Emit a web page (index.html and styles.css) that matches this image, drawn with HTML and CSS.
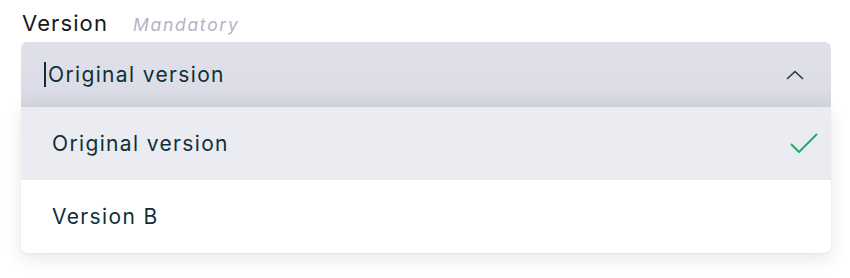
FILE: index.html
```html
<!DOCTYPE html>
<html>
<head>
<meta charset="utf-8">
<link rel="stylesheet" href="styles.css">
</head>
<body>
<div class="field">
  <div class="label-row">
    <span class="label">Version</span>
    <span class="hint">Mandatory</span>
  </div>
  <div class="select">
    <div class="control">
      <span class="caret"></span>
      <span class="value">Original version</span>
      <svg class="chevron" width="18" height="10" viewBox="0 0 18 10"><path d="M1.5 8.5 L9 1.5 L16.5 8.5" fill="none" stroke="#1f3a40" stroke-width="1.6" stroke-linecap="round" stroke-linejoin="round"/></svg>
    </div>
    <ul class="menu">
      <li class="option selected">
        <span>Original version</span>
        <svg class="check" width="28" height="22" viewBox="0 0 28 22"><path d="M1.5 11.5 L9 19 L26.5 1.5" fill="none" stroke="#20a862" stroke-width="1.8" stroke-linecap="round" stroke-linejoin="round"/></svg>
      </li>
      <li class="option"><span>Version B</span></li>
    </ul>
  </div>
</div>
</body>
</html>
```
FILE: styles.css
```css
html, body {
  margin: 0;
  padding: 0;
  background: #ffffff;
}
body {
  font-family: Inter, "Noto Sans", sans-serif;
  width: 850px;
  height: 278px;
  overflow: hidden;
}
.field {
  padding: 8px 19px 0 21px;
}
.label-row {
  display: flex;
  align-items: baseline;
  gap: 25px;
  height: 34px;
  padding-left: 1px;
}
.label {
  font-size: 22px;
  letter-spacing: 1.1px;
  color: #17191c;
  line-height: 30px;
}
.hint {
  font-size: 17.5px;
  letter-spacing: 1.7px;
  font-style: italic;
  color: #b1b4c6;
}
.select {
  display: flex;
  flex-direction: column;
}
.control {
  height: 65px;
  display: flex;
  align-items: center;
  padding: 0 27px 0 23px;
  background: linear-gradient(#dfe0ea 0%, #dcdde7 70%, #d2d4df 100%);
  border-radius: 6px 6px 0 0;
}
.caret {
  width: 2px;
  height: 25px;
  background: #0f2e33;
  margin-right: 2px;
}
.value {
  flex: 1;
  font-size: 21px;
  letter-spacing: 1.35px;
  color: #0f3038;
}
.chevron {
  display: block;
}
.menu {
  list-style: none;
  margin: 0;
  padding: 0;
  background: #ffffff;
  border-radius: 0 0 7px 7px;
  box-shadow: 0 6px 18px rgba(20, 25, 50, 0.10), 0 1px 3px rgba(20, 25, 50, 0.05);
  overflow: hidden;
}
.option {
  height: 73px;
  display: flex;
  align-items: center;
  justify-content: space-between;
  padding: 0 13px 0 31px;
  font-size: 21px;
  letter-spacing: 1.35px;
  color: #0f3038;
}
.option.selected {
  background: #ebecf2;
}
.check {
  display: block;
}
```
